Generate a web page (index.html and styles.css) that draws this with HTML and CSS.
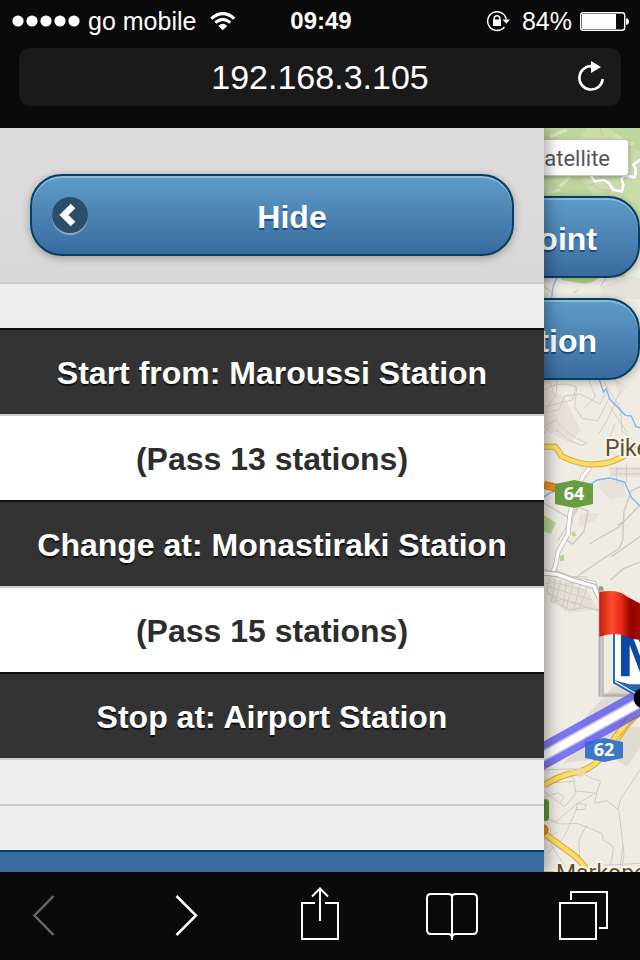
FILE: index.html
```html
<!DOCTYPE html>
<html lang="en">
<head>
<meta charset="utf-8">
<meta name="viewport" content="width=device-width, initial-scale=1">
<title>Metro route</title>
<link rel="stylesheet" href="styles.css">
</head>
<body>
<header class="browser">
  <div class="status">
    <div class="status-left">
      <svg class="signal" viewBox="0 0 68 12" fill="#fff" aria-hidden="true"><circle cx="6" cy="6" r="5.6"/><circle cx="20" cy="6" r="5.6"/><circle cx="34" cy="6" r="5.6"/><circle cx="48" cy="6" r="5.6"/><circle cx="62" cy="6" r="5.6"/></svg>
      <span>go mobile</span>
      <svg class="wifi" viewBox="210 10 26 20" fill="none" stroke="#fff" stroke-width="3.2" aria-hidden="true"><path d="M211.300 17.600Q222.800 7.600 234.300 17.600M215.300 21.600Q222.800 15.200 230.300 21.600"/><path d="M218.400 25Q222.800 20.600 227.200 25L222.800 29.200Z" fill="#fff" stroke="none"/></svg>
    </div>
    <strong class="clock">09:49</strong>
    <div class="status-right">
      <svg class="lock" viewBox="486 9 25 22" fill="none" stroke="#fff" stroke-width="1.500" aria-hidden="true"><path d="M506.200 18A9.400 9.400 0 1 0 504.400 26"/><path d="M494.200 19v-1.500a2.800 2.800 0 0 1 5.600 0v1.500"/><path d="M493 18.500h8v6.500h-8ZM502.500 18.500h7.500l-3.700 4.200Z" fill="#fff" stroke="none"/></svg>
      <span>84%</span>
      <svg class="battery" viewBox="580 10 50 20" aria-hidden="true"><rect x="580.700" y="11.700" width="44" height="17.600" rx="2.500" fill="none" stroke="#fff" stroke-width="1.400"/><path d="M582 13h34v15h-34ZM626 17q3 .5 3 3.500t-3 3.500Z" fill="#fff"/></svg>
    </div>
  </div>
  <form class="address">
    <input class="url" type="text" value="192.168.3.105" aria-label="Address">
    <button class="reload" type="button" aria-label="Reload"><svg viewBox="576 60 30 34" fill="none" stroke="#fff" stroke-width="2.600"><path d="M592 66.200A11.700 11.700 0 1 0 602.700 79"/><path d="M591 61l10 6-10 6Z" fill="#fff" stroke="none"/></svg></button>
  </form>
</header>

<main class="page">
  <section class="panel" aria-label="Route">
    <div class="panel-head">
      <button class="btn btn-hide" type="button">
        <svg class="back-icon" viewBox="50 195 40 42" aria-hidden="true"><circle cx="70" cy="218" r="18" fill="#88a8cb"/><circle cx="70" cy="216" r="18" fill="#2d4e69"/><path d="M73 207l-9 9 9 9" fill="none" stroke="#fff" stroke-width="6.500"/></svg>
        <span>Hide</span>
      </button>
    </div>
    <ul class="route">
      <li class="stop">Start from: Maroussi Station</li>
      <li class="leg">(Pass 13 stations)</li>
      <li class="stop">Change at: Monastiraki Station</li>
      <li class="leg">(Pass 15 stations)</li>
      <li class="stop">Stop at: Airport Station</li>
    </ul>
    <div class="spacer"></div>
    <div class="next"></div>
  </section>

  <section class="map" aria-label="Map">
    <svg class="tiles" viewBox="544 128 96 744" preserveAspectRatio="xMinYMin slice" aria-hidden="true">
      <defs>
        <linearGradient id="flag"><stop offset="0" stop-color="#c51b0e"/><stop offset=".28" stop-color="#ff4d2e"/><stop offset=".5" stop-color="#e52916"/><stop offset=".72" stop-color="#930400"/><stop offset="1" stop-color="#a80b04"/></linearGradient>
        <linearGradient id="pole"><stop offset="0" stop-color="#999"/><stop offset=".5" stop-color="#d0d0d0"/><stop offset="1" stop-color="#aaa"/></linearGradient>
        <filter id="soft" x="-20%" y="-20%" width="140%" height="140%"><feGaussianBlur stdDeviation="3"/></filter>
      </defs>
      <rect x="544" y="128" width="96" height="744" fill="#efece4"/>

      <g transform="translate(530 120) scale(.33333)" fill="none">
        <path d="M42 24H330V330L280 480Q220 500 160 482L42 420Z" fill="#c8dda7"/>
        <path d="M42 24h130l-50 70-80 60ZM240 24h90v70l-40-20ZM60 190l90-20 40 60H80Z" fill="#bdd69b"/>
        <path d="M60 50l50-20M90 200l30-30M250 45l60 30M50 220l40-10M180 180l40 10" stroke="#d5e5ba" stroke-width="10"/>
        <path d="M210 24l8 26M125 224q0-36 24-36l18 8 22-4 18 18 24 0 6 18M228 218l20-12 30 4" stroke="#cfc6ab" stroke-width="4"/>
        <path d="M158 158l24 8 12 18 28-4 16 10 12 20 26 4 4-20-6-18 12-10 28 6 4-24-8-14 22-16" stroke="#d2ccbd" stroke-width="13" stroke-linejoin="round"/>
        <path d="M158 158l24 8 12 18 28-4 16 10 12 20 26 4 4-20-6-18 12-10 28 6 4-24-8-14 22-16" stroke="#fff" stroke-width="8" stroke-linejoin="round"/>
        <path d="M42 474h50l40 16 62-8 10-10h126v80H42Z" fill="#efece4"/>
        <path d="M94 472h112q-18 22-54 18l-58-10Z" fill="#b5d48e"/>
        <path d="M212 500l60-22 40-10 18 10v60H210Z" fill="#e6e2da"/>
        <path d="M82 472l-12 24-6 40" stroke="#8fb9f0" stroke-width="4"/>
        <path d="M42 500l22 16v20M210 500l20-28M130 520l16-12" stroke="#cdc8bd" stroke-width="3"/>
      </g>

      <g transform="translate(530 370) scale(.33333)" fill="none">
        <path d="M42 50l60 30 50 100-30 40-80-40ZM212 330h70l6 50-46 8-34-30ZM150 428h60l-16 24-50 16ZM250 20l40 30-20 30ZM240 290h90v30h-90Z" fill="#e6e1d9"/>
        <path d="M42 60q50-30 96-10l-10 40-86 20M60 34l14 44-32 50 44-8 18-42 46-6 60 30 22-44M140 52l-6 60 24 34 46 6 34-70M42 190l32-42 34 34 32 24 32 14-18 6-42-18-34-30M176 28l20 52-34 36M42 170l40-24M82 28l-4 54M270 64l-40 90-24 38M240 110l50 76M220 34l52 82 4 68 30 22M256 160l-20 50" stroke="#d3ccc1" stroke-width="3"/>
        <path d="M330 350l-26 12-22 62-4 88-10 22-120 80-30 30M330 404l-62 66-90 52M330 576l-50 20-38 34M262 466l16-10M128 430l16-20 30 14-12 60-34 38-16-12 16-66M42 400l80 46M152 400l-28 50-40 60M330 500l-86 60" stroke="#d0c8bc" stroke-width="4"/>
        <path d="M238 296h92M242 312h88M260 290v50M290 280v60M60 620h110v40M80 620l-20 40M110 614v46M48 640h120" stroke="#d2ccc2" stroke-width="3"/>
        <path d="M208 28l12 38 8-10 12 32 46 48 18 2 14 32 20 4M42 380l20-12 46-14 60-2 34-22 38-6 44 12 20 46 26 26" stroke="#83b1f2" stroke-width="4"/>
        <path d="M42 436l36 22-16 34-20-8ZM122 488l10-4 8 12-10 4ZM90 558l12-4v18l-12 2Z" fill="#b8d590"/>
        <path d="M180 284l-4 14-18 22-20 52-18 60-6 60-30 54-6 36-14 36M42 606l40 4 42 16 68 14 12 30" stroke="#c4beb4" stroke-width="15"/>
        <path d="M180 284l-4 14-18 22-20 52-18 60-6 60-30 54-6 36-14 36M42 606l40 4 42 16 68 14 12 30" stroke="#fff" stroke-width="10"/>
        <path d="M42 230h32q10 8 20 28 50 24 84 25 54 2 84-15l70-36" stroke="#dcb049" stroke-width="19"/>
        <path d="M42 230h32q10 8 20 28 50 24 84 25 54 2 84-15l70-36" stroke="#ffdc65" stroke-width="12"/>
        <path d="M42 345l50 12" stroke="#cf7716" stroke-width="24"/><path d="M42 345l50 12" stroke="#f28e1c" stroke-width="18"/>
        <path d="M75 342l58-12 56 12v60l-56 12-58-12Z" fill="#699d43"/>
      </g>

      <g transform="translate(530 570) scale(.33333)" fill="none">
        <path d="M60 20l110 40 36 60-90 8-56-34Z" fill="#e5e0d7"/>
        <path d="M60 24l-10 36 40 44 30 16 48-8 38 10M76 26l-12 70M94 30l-20 70M110 36l-12 76M130 40l-24 84M150 46l-18 72M170 60l-24 56M56 50l130 40M48 70l140 46M66 36l104 26M62 98l34-10 40 14" stroke="#cfc9bf" stroke-width="3"/>
        <path d="M42 9l40 4 42 16 68 20 16 36" stroke="#bbb5ac" stroke-width="16"/><path d="M42 9l40 4 42 16 68 20 16 36" stroke="#fff" stroke-width="10"/>
        <path d="M250 350L150 460v50h80l100-90v-70Z" fill="#dfdad2"/>
        <path d="M340 410l-50 50-34 50" stroke="#d5ab43" stroke-width="26"/><path d="M340 410l-50 50-34 50" stroke="#ffdc65" stroke-width="18"/>
      </g>

      <g transform="translate(530 720) scale(.33333)" fill="none">
        <path d="M250 90l50-70h30v60l-38 60-42-26ZM100 130l60-60 50 10-36 40Z" fill="#e0dad2"/>
        <path d="M42 150l90-4 44 24 36 14-12 34-60 34-60 52-38-8M42 190l90-6 6 36-34 40-62-46M42 232l44-14 16 14-12 14M132 212l68 8-6 30 36-8 36 28 10 80 6 50-6 50M330 150l-58 88-8 30M48 296l40 16 54-2 74 30 4 20 30 20-4 40-20 50M170 316l-24 44 4 70M142 262l-40 90-50 48M120 160l16 24M140 250l28 4-2 14-26 2ZM60 320l6 60 40 60M42 360l40-24M220 436l110-6M270 450l8-70" stroke="#cfcbc3" stroke-width="3"/>
        <path d="M42 196q36-24 84-37 66-8 92-56l40-54L310-16" stroke="#d6ae4b" stroke-width="20"/><path d="M42 196q36-24 84-37 66-8 92-56l40-54L310-16" stroke="#ffdc65" stroke-width="13"/>
        <circle cx="152" cy="157" r="13" fill="#ecd9a6"/><circle cx="126" cy="151" r="8" fill="#e4d6ae"/>
        <path d="M42 340l76 56q32 20 60 64" stroke="#d6ae4b" stroke-width="20"/><path d="M42 340l76 56q32 20 60 64" stroke="#ffdc65" stroke-width="13"/>
        <circle cx="38" cy="330" r="16" fill="#ee8c22" stroke="#c26c10" stroke-width="3"/>
        <path d="M36 238h16l5 6v52l-5 6H36Z" fill="#5e963b"/>
        <path d="M42 456h28" stroke="#e8bf4b" stroke-width="6"/>
      </g>

      <path d="M585 742l19-4 19 4v16l-19 4-19-4Z" fill="#3978c8"/>
      <path d="M534 761L646 699" stroke="#5551f4" stroke-opacity=".76" stroke-width="25"/>
      <path d="M534 761L646 699" stroke="#fff" stroke-width="8"/>
      <path d="M534 761L646 699" stroke="#fff" stroke-opacity=".5" stroke-width="11"/>

      <g transform="translate(530 570) scale(.33333)">
        <path d="M214 376h90l26-20" stroke="#777" stroke-opacity=".55" stroke-width="8" fill="none" filter="url(#soft)"/>
        <path d="M252 180h90v210l-90-52Z" fill="#fff" stroke="#2d6bb5" stroke-width="6"/>
        <path d="M252 330l46 13h40v38Z" fill="#2766af"/>
        <path d="M273 180h28l39 105v48L299 225v94h-26Z" fill="#0a49a4"/>
        <path d="M320 194h20v50Z" fill="#0a49a4"/>
        <rect x="206" y="54" width="15" height="326" rx="3" fill="url(#pole)"/><circle cx="213" cy="55" r="7" fill="#999"/>
        <path d="M208 66q58-10 84 14l48 26v104q-38-2-68-16-30-6-64 6Z" fill="url(#flag)"/>
        <circle cx="343" cy="384" r="32" fill="#000"/>
      </g>
      <g class="shield"><text x="574" y="500">64</text><text x="604" y="756">62</text></g>
      <g class="place"><text x="605" y="456">Pikermi</text><text x="556" y="881">Markopoulo</text></g>
    </svg>
    <div class="controls">
      <button class="type" type="button">Satellite</button>
      <button class="btn btn-map" type="button">Point</button>
      <button class="btn btn-map" type="button">Station</button>
    </div>
  </section>
</main>

<nav class="toolbar" aria-label="Browser">
  <button type="button" aria-label="Back" disabled><svg viewBox="10 872 70 88"><path d="M53.500 896L34.500 915.500l19 19.500" stroke="#666" stroke-width="2.500"/></svg></button>
  <button type="button" aria-label="Forward"><svg viewBox="145 872 70 88"><path d="M176.500 896l19.500 19.500-19.500 19.500" stroke-width="2.500"/></svg></button>
  <button type="button" aria-label="Share"><svg viewBox="279 872 70 88"><path d="M315 903h-13v36h36v-36h-13M320 921v-32M312 896.500l8-8 8 8"/></svg></button>
  <button type="button" aria-label="Bookmarks"><svg viewBox="414 872 70 88"><path d="M452 940v-43q0-3-4-3h-17q-4 0-4 4v32q0 4 4 4h17q4 0 4 4q0-4 4-4h17q4 0 4-4v-32q0-4-4-4h-17q-4 0-4 3"/></svg></button>
  <button type="button" aria-label="Tabs"><svg viewBox="548 872 70 88"><path d="M560 903h36v36h-36ZM571 900v-8h36v36h-8"/></svg></button>
</nav>
</body>
</html>
```
FILE: styles.css
```css
* { box-sizing: border-box; }

body {
  margin: 0;
  height: 100vh;
  display: flex;
  flex-direction: column;
  overflow: hidden;
  background: #0a0a0a;
  color: #fff;
  font-family: "Liberation Sans", Arial, sans-serif;
}

button {
  margin: 0;
  padding: 0;
  border: 0;
  background: none;
  color: inherit;
  font: inherit;
}

svg { display: block; }

.browser { flex: none; padding-bottom: 22px; }

.status {
  display: grid;
  grid-template-columns: 1fr auto 1fr;
  align-items: center;
  height: 40px;
  padding: 1px 10px 0 12px;
  font-size: 25px;
  line-height: 38px;
}

.status-left, .status-right { display: flex; align-items: center; gap: 8px; }
.status-right { justify-content: flex-end; }
.signal { width: 68px; height: 12px; }
.wifi { width: 26px; height: 20px; margin-left: 6px; }
.lock { width: 25px; height: 22px; margin-right: 3px; }
.battery { width: 50px; height: 20px; }
.clock { font-size: 24px; }

.address {
  display: grid;
  grid-template-columns: 60px 1fr 60px;
  height: 58px;
  margin: 8px 19px 0;
  border-radius: 11px;
  background: #1a1a1a;
}

.url {
  grid-column: 2;
  min-width: 0;
  padding: 0;
  border: 0;
  background: none;
  color: #fff;
  font: 34px "Liberation Sans", Arial, sans-serif;
  text-align: center;
}

.reload { display: grid; place-items: center; }
.reload svg { width: 30px; height: 34px; }

.page {
  flex: 1;
  min-height: 0;
  display: grid;
  grid-template-columns: 85% 15%;
  grid-template-rows: 100%;
  overflow: hidden;
}

.panel {
  position: relative;
  z-index: 1;
  display: flex;
  flex-direction: column;
  background: #eee;
  box-shadow: 4px 0 14px rgba(0, 0, 0, .35);
}

.panel-head {
  padding: 46px 30px 26px;
  border-bottom: 2px solid #ccc;
  background: linear-gradient(#ddd, #d8d8d8);
}

.btn {
  height: 82px;
  border: 2px solid #044062;
  border-radius: 32px;
  background: linear-gradient(#5f9cc9, #396b9e);
  box-shadow: inset 0 2px 0 rgba(255, 255, 255, .3), 0 2px 8px rgba(0, 0, 0, .3);
  color: #fff;
  font-size: 32px;
  font-weight: bold;
  line-height: 40px;
  text-shadow: 0 2px 0 #194b7e;
}

.btn-hide {
  display: flex;
  align-items: center;
  width: 100%;
  padding: 0 18px;
}
.btn-hide span { flex: 1; padding-top: 4px; text-align: center; }
.back-icon { width: 40px; height: 42px; }

.route {
  margin: 44px 0 0;
  padding: 0;
  list-style: none;
  font-size: 32px;
  font-weight: bold;
  text-align: center;
  white-space: nowrap;
}
.route li { padding-top: 2px; line-height: 82px; }
.stop {
  border-top: 2px solid #111;
  border-bottom: 2px solid #ccc;
  background: #333;
  text-shadow: 0 2px 0 #111;
}
.leg { background: #fff; color: #2d2d2d; }

.spacer { flex: none; height: 46px; border-bottom: 2px solid #ccc; }
.next {
  flex: 1;
  margin-top: 44px;
  border-top: 2px solid #044062;
  background: #396b9e;
}

.map { position: relative; overflow: hidden; background: #efece4; }
.tiles { width: 100%; height: 100%; }
.shield {
  fill: #fff;
  font: bold 18px "Open Sans", sans-serif;
  text-anchor: middle;
}
.place {
  fill: #5f4e31;
  stroke: #f7f4ed;
  stroke-width: 4px;
  paint-order: stroke;
  font: 23px Roboto, sans-serif;
}

/* Map controls float over the tiles and run under the open panel. */
.controls {
  position: absolute;
  top: 11px;
  right: 0;
  display: flex;
  flex-direction: column;
  align-items: flex-end;
  gap: 20px;
}
.type {
  height: 37px;
  margin-right: 11px;
  padding: 2px 18px 0;
  border: 1px solid #c4c4b8;
  border-radius: 4px;
  background: #fff;
  box-shadow: 0 2px 4px rgba(0, 0, 0, .3);
  color: #565656;
  font: 22px Roboto, sans-serif;
}
.btn-map { width: 220px; padding: 4px 41px 0 0; text-align: right; }

.toolbar {
  position: relative;
  z-index: 2;
  flex: none;
  display: flex;
  justify-content: space-between;
  height: 88px;
  padding: 0 22px 0 10px;
  background: #0a0a0a;
}
.toolbar svg {
  width: 70px;
  height: 88px;
  fill: none;
  stroke: #fff;
  stroke-width: 2;
}
```
